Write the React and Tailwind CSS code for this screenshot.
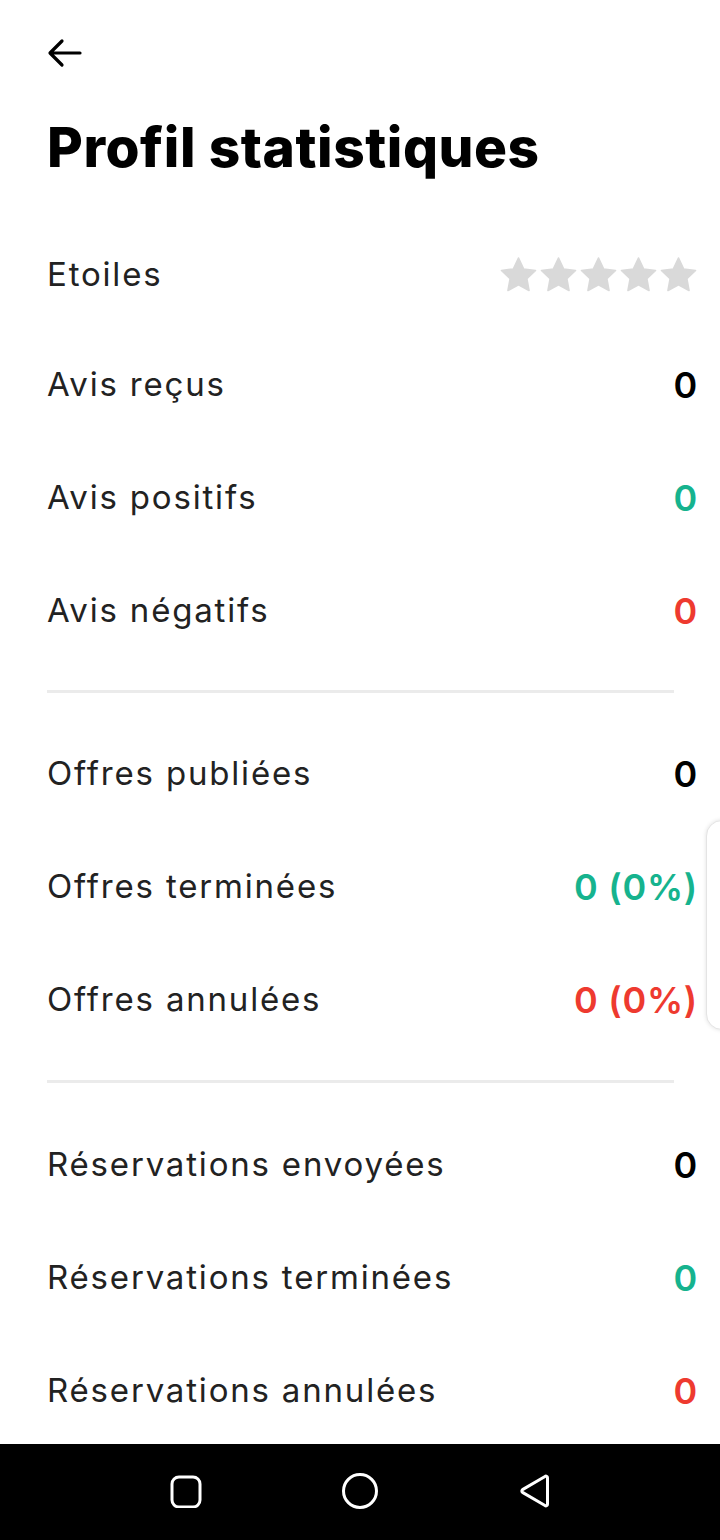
import React from "react";

const Star = () => (
  <svg width="41" height="40" viewBox="0 0 24 24" className="-mx-[0.5px]">
    <path
      d="M12 1.8l3.1 6.6 7.1.9-5.2 4.9 1.3 7.1L12 17.8l-6.3 3.5 1.3-7.1L1.8 9.3l7.1-.9z"
      fill="#d9d9d9"
      stroke="#d9d9d9"
      strokeWidth="1"
      strokeLinejoin="round"
    />
  </svg>
);

const Row = ({ label, value, color }) => (
  <div className="flex items-center justify-between h-[113px]">
    <span className="text-[33px] tracking-[0.055em] text-[#222222]">{label}</span>
    <span className={`text-[36px] font-semibold tracking-[0.02em] ${color}`}>{value}</span>
  </div>
);

export default function App() {
  return (
    <div
      className="relative w-[720px] h-[1540px] bg-white overflow-hidden flex flex-col"
      style={{ fontFamily: "Inter, 'Noto Sans', sans-serif" }}
    >
      <div className="flex-1 pl-[47px] pr-[22px]">
        <div className="pt-[36px] h-[90px]">
          <svg width="36" height="34" viewBox="0 0 36 34" fill="none" stroke="#000" strokeWidth="3.2" strokeLinecap="round" strokeLinejoin="round">
            <path d="M33 17H4M15 5L3 17l12 12" />
          </svg>
        </div>
        <h1 className="text-[55px] font-extrabold tracking-[0.01em] text-black leading-none mt-[30px] mb-[46px]">
          Profil statistiques
        </h1>
        <div className="flex items-center justify-between h-[107px]">
          <span className="text-[33px] tracking-[0.055em] text-[#222222]">Etoiles</span>
          <div className="flex">
            <Star /><Star /><Star /><Star /><Star />
          </div>
        </div>
        <Row label="Avis reçus" value="0" color="text-black" />
        <Row label="Avis positifs" value="0" color="text-[#16b38e]" />
        <Row label="Avis négatifs" value="0" color="text-[#ee3a2f]" />
        <div className="h-[3px] bg-[#ebebeb] mt-[23px] mb-[24px] mr-[24px]" />
        <Row label="Offres publiées" value="0" color="text-black" />
        <Row label="Offres terminées" value="0 (0%)" color="text-[#16b38e]" />
        <Row label="Offres annulées" value="0 (0%)" color="text-[#ee3a2f]" />
        <div className="h-[3px] bg-[#ebebeb] mt-[24px] mb-[25px] mr-[24px]" />
        <Row label="Réservations envoyées" value="0" color="text-black" />
        <Row label="Réservations terminées" value="0" color="text-[#16b38e]" />
        <Row label="Réservations annulées" value="0" color="text-[#ee3a2f]" />
      </div>

      <div className="absolute left-[706px] top-[820px] w-[40px] h-[210px] rounded-[16px] bg-white border border-[#e4e4e4] shadow-[0_0_4px_rgba(0,0,0,0.12)]" />

      <div className="absolute left-0 bottom-0 w-[720px] h-[96px] bg-black flex items-center justify-center">
        <div className="flex items-center gap-[138px] -mt-[2px]">
          <svg width="34" height="34" viewBox="0 0 34 34" fill="none" stroke="#fff" strokeWidth="3">
            <rect x="3" y="3" width="28" height="30" rx="7" />
          </svg>
          <svg width="38" height="38" viewBox="0 0 38 38" fill="none" stroke="#fff" strokeWidth="3">
            <circle cx="19" cy="19" r="16.5" />
          </svg>
          <svg width="34" height="38" viewBox="0 0 34 38" fill="none" stroke="#fff" strokeWidth="3" strokeLinejoin="round">
            <path d="M28 4.5c1-.8 2.5-.2 2.5 1.2v26.6c0 1.4-1.5 2-2.5 1.2L5.5 20.4c-.9-.7-.9-2.1 0-2.8z" />
          </svg>
        </div>
      </div>
    </div>
  );
}
